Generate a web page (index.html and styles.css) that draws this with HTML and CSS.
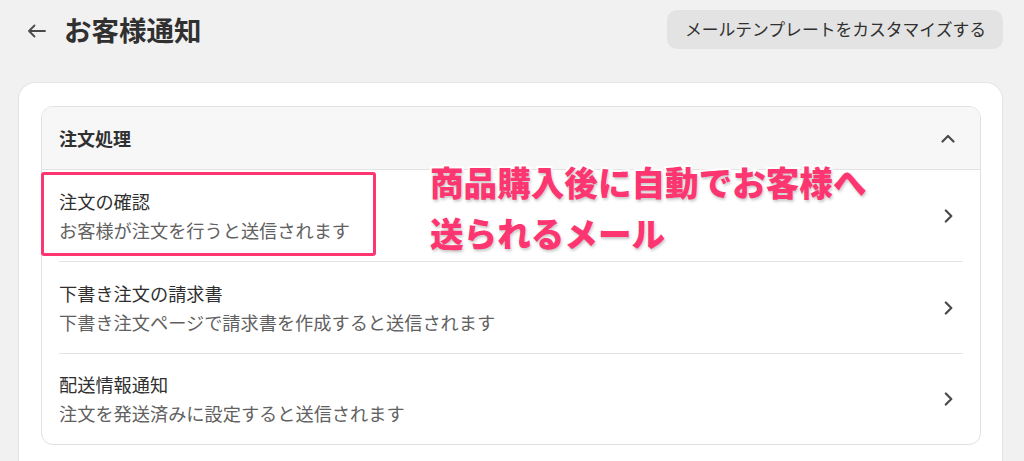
FILE: index.html
```html
<!DOCTYPE html>
<html lang="ja">
<head>
<meta charset="utf-8">
<link rel="stylesheet" href="styles.css">
</head>
<body>
<header class="topbar">
  <div class="title-group">
    <svg class="back" width="19" height="14" viewBox="0 0 19 14" aria-hidden="true">
      <path d="M18 7H2M7.5 1.5L2 7l5.5 5.5" fill="none" stroke="#4a4a4a" stroke-width="1.8" stroke-linecap="round" stroke-linejoin="round"/>
    </svg>
    <h1 class="title">お客様通知</h1>
  </div>
  <button class="btn">メールテンプレートをカスタマイズする</button>
</header>

<main class="card">
  <section class="group">
    <div class="group-head">
      <span class="group-title">注文処理</span>
      <svg class="chev-up" width="14" height="9" viewBox="0 0 14 9" aria-hidden="true">
        <path d="M1.5 7.5L7 2l5.5 5.5" fill="none" stroke="#4a4a4a" stroke-width="2.2" stroke-linecap="round" stroke-linejoin="round"/>
      </svg>
    </div>
    <ul class="rows">
      <li class="row">
        <div class="row-inner">
          <div class="row-text">
            <div class="row-title">注文の確認</div>
            <div class="row-sub">お客様が注文を行うと送信されます</div>
          </div>
          <svg class="chev" width="9" height="14" viewBox="0 0 9 14" aria-hidden="true">
            <path d="M1.8 1.5L7.3 7l-5.5 5.5" fill="none" stroke="#4a4a4a" stroke-width="2.2" stroke-linecap="round" stroke-linejoin="round"/>
          </svg>
        </div>
      </li>
      <li class="row">
        <div class="row-inner">
          <div class="row-text">
            <div class="row-title">下書き注文の請求書</div>
            <div class="row-sub">下書き注文ページで請求書を作成すると送信されます</div>
          </div>
          <svg class="chev" width="9" height="14" viewBox="0 0 9 14" aria-hidden="true">
            <path d="M1.8 1.5L7.3 7l-5.5 5.5" fill="none" stroke="#4a4a4a" stroke-width="2.2" stroke-linecap="round" stroke-linejoin="round"/>
          </svg>
        </div>
      </li>
      <li class="row">
        <div class="row-inner last">
          <div class="row-text">
            <div class="row-title">配送情報通知</div>
            <div class="row-sub">注文を発送済みに設定すると送信されます</div>
          </div>
          <svg class="chev" width="9" height="14" viewBox="0 0 9 14" aria-hidden="true">
            <path d="M1.8 1.5L7.3 7l-5.5 5.5" fill="none" stroke="#4a4a4a" stroke-width="2.2" stroke-linecap="round" stroke-linejoin="round"/>
          </svg>
        </div>
      </li>
    </ul>
    <div class="highlight"></div>
    <p class="note">商品購入後に自動でお客様へ<br>送られるメール</p>
  </section>
</main>
</body>
</html>
```

FILE: styles.css
```css
* { box-sizing: border-box; }
html, body { margin: 0; padding: 0; }
body {
  background: #f1f1f1;
  font-family: "Noto Sans CJK JP", "Noto Sans", sans-serif;
  color: #303030;
  height: 461px;
  overflow: hidden;
}
.topbar {
  display: flex;
  align-items: center;
  justify-content: space-between;
  padding: 10px 21px 0 27px;
  height: 49px;
}
.title-group {
  display: flex;
  align-items: center;
  gap: 18px;
}
.back { display: block; margin-top: 2px; }
.title {
  margin: 0;
  font-size: 27.5px;
  font-weight: 700;
  line-height: 39px;
  color: #303030;
}
.btn {
  height: 39px;
  padding: 0 17px 0 18px;
  border: none;
  border-radius: 10px;
  background: #e3e3e3;
  font-family: inherit;
  font-size: 16.8px;
  color: #303030;
  line-height: 39px;
}
.card {
  margin: 34px 22px 0 19px;
  background: #fff;
  border-radius: 16px 16px 0 0;
  box-shadow: 0 0 0 1px rgba(0,0,0,0.05), 0 1px 1px rgba(0,0,0,0.06);
  padding: 23px 21px 17px 22px;
}
.group {
  position: relative;
  border: 1px solid #e1e1e1;
  border-radius: 12px;
}
.group-head {
  display: flex;
  align-items: center;
  justify-content: space-between;
  height: 63px;
  padding: 0 25px 0 17px;
  background: #f7f7f7;
  border-bottom: 1px solid #e3e3e3;
  border-radius: 11px 11px 0 0;
}
.group-title {
  font-size: 18px;
  font-weight: 700;
  color: #303030;
}
.chev-up { display: block; margin-top: 1px; }
.rows {
  list-style: none;
  margin: 0;
  padding: 0;
}
.row { padding: 0 17px; }
.row-inner {
  display: flex;
  align-items: center;
  justify-content: space-between;
  height: 92px;
  padding-right: 10px;
  border-bottom: 1px solid #e3e3e3;
}
.row-inner.last { border-bottom: none; height: 90px; }
.row-title {
  font-size: 18.2px;
  line-height: 29px;
  color: #303030;
}
.row-sub {
  font-size: 18.2px;
  line-height: 29px;
  color: #616161;
}
.chev { display: block; }
.highlight {
  position: absolute;
  left: -1px;
  top: 65px;
  width: 335px;
  height: 84px;
  border: 3px solid #fd3570;
  border-radius: 3px;
}
.note {
  position: absolute;
  left: 388px;
  top: 50px;
  margin: 0;
  font-size: 33.6px;
  font-weight: 900;
  line-height: 50.5px;
  color: #fd3570;
  -webkit-text-stroke: 4px #fff;
  paint-order: stroke fill;
  text-shadow: 1px 2px 3px rgba(0,0,0,0.22);
  white-space: nowrap;
}
```
